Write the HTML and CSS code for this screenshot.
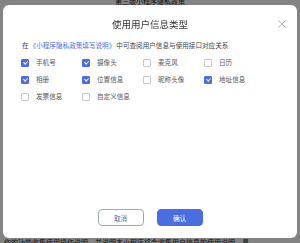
FILE: index.html
```html
<!DOCTYPE html>
<html lang="zh-CN">
<head>
  <meta charset="UTF-8" />
  <title>使用用户信息类型</title>
  <link rel="stylesheet" href="styles.css">
</head>
<body>
  <div class="page">
    <div class="page-top">第三版小程序隐私政策</div>
    <div class="page-bottom">你的功能收集使用操作说明，并说明本小程序将会收集用户信息的使用说明，具</div>
  </div>

  <div class="mask">
    <div class="dialog">
      <div class="dialog-header">
        <span class="dialog-title">使用用户信息类型</span>
        <span class="close">
          <svg width="8" height="8" viewBox="0 0 8 8"><path d="M0.5 0.5L7.5 7.5M7.5 0.5L0.5 7.5" stroke="#9a9a9a" stroke-width="0.8" fill="none"/></svg>
        </span>
      </div>

      <div class="desc">在<a class="link">《小程序隐私政策填写说明》</a>中可查阅用户信息与使用接口对应关系</div>

      <div class="options">
        <label class="opt checked"><i class="box"></i>手机号</label>
        <label class="opt checked"><i class="box"></i>摄像头</label>
        <label class="opt"><i class="box"></i>麦克风</label>
        <label class="opt"><i class="box"></i>日历</label>
        <label class="opt checked"><i class="box"></i>相册</label>
        <label class="opt checked"><i class="box"></i>位置信息</label>
        <label class="opt"><i class="box"></i>昵称头像</label>
        <label class="opt checked"><i class="box"></i>地址信息</label>
        <label class="opt"><i class="box"></i>发票信息</label>
        <label class="opt"><i class="box"></i>自定义信息</label>
      </div>

      <div class="dialog-footer">
        <button class="btn btn-cancel">取消</button>
        <button class="btn btn-ok">确认</button>
      </div>
    </div>
  </div>
</body>
</html>
```

FILE: styles.css
```css
:root {
  --primary: #4a6ee0;
  --text: #333333;
  --muted: #666666;
  --border: #c8c8c8;
}

body {
  margin: 0;
  font-family: "Noto Sans CJK SC", "Noto Sans", sans-serif;
  color: var(--text);
}

.page {
  width: 300px;
  height: 243px;
  background-color: #eeeeee;
  display: flex;
  flex-direction: column;
  justify-content: space-between;
  overflow: hidden;
}

.page-top {
  text-align: center;
  font-size: 7px;
  line-height: 8px;
  margin-top: -3px;
  color: #222;
}

.page-bottom {
  font-size: 7px;
  line-height: 8px;
  margin-bottom: -3px;
  padding-left: 4px;
  white-space: nowrap;
  color: #222;
}

.mask {
  position: fixed;
  inset: 0;
  background-color: rgba(0, 0, 0, 0.45);
  display: flex;
  padding: 5px 3px 5px 3px;
}

.dialog {
  flex: 1;
  background-color: #ffffff;
  border-radius: 6px;
  display: flex;
  flex-direction: column;
  padding: 0 17px;
}

.dialog-header {
  height: 36px;
  display: flex;
  align-items: center;
  justify-content: center;
  position: relative;
}

.dialog-title {
  font-size: 9.5px;
  color: #333;
  padding-top: 1px;
}

.close {
  position: absolute;
  right: -6px;
  top: 15px;
  line-height: 0;
}

.desc {
  font-size: 6.6px;
  line-height: 9px;
  color: #444;
  padding-left: 2px;
  word-spacing: 0;
}

.link {
  color: var(--primary);
  margin: 0 1px;
}

.options {
  display: grid;
  grid-template-columns: repeat(4, 61px);
  row-gap: 8px;
  margin-top: 8px;
  padding-left: 1px;
}

.opt {
  display: flex;
  align-items: center;
  gap: 7px;
  font-size: 6.6px;
  line-height: 9px;
  color: #555;
}

.box {
  width: 6px;
  height: 6px;
  border: 1px solid var(--border);
  border-radius: 1px;
  box-sizing: content-box;
  position: relative;
  flex: none;
}

.opt.checked .box {
  background-color: var(--primary);
  border-color: var(--primary);
}

.opt.checked .box::after {
  content: "";
  position: absolute;
  left: 1.8px;
  top: 0.3px;
  width: 1.6px;
  height: 3.4px;
  border: solid #fff;
  border-width: 0 1px 1px 0;
  transform: rotate(45deg);
}

.dialog-footer {
  margin-top: auto;
  margin-bottom: 12px;
  display: flex;
  justify-content: center;
  gap: 13px;
}

.btn {
  width: 46px;
  height: 17px;
  border-radius: 4px;
  font-family: inherit;
  font-size: 6.6px;
  padding: 0;
  cursor: pointer;
}

.btn-cancel {
  background-color: #fff;
  border: 1px solid #9aa6cf;
  color: #5a6ea8;
}

.btn-ok {
  background-color: var(--primary);
  border: 1px solid var(--primary);
  color: #fff;
}
```
